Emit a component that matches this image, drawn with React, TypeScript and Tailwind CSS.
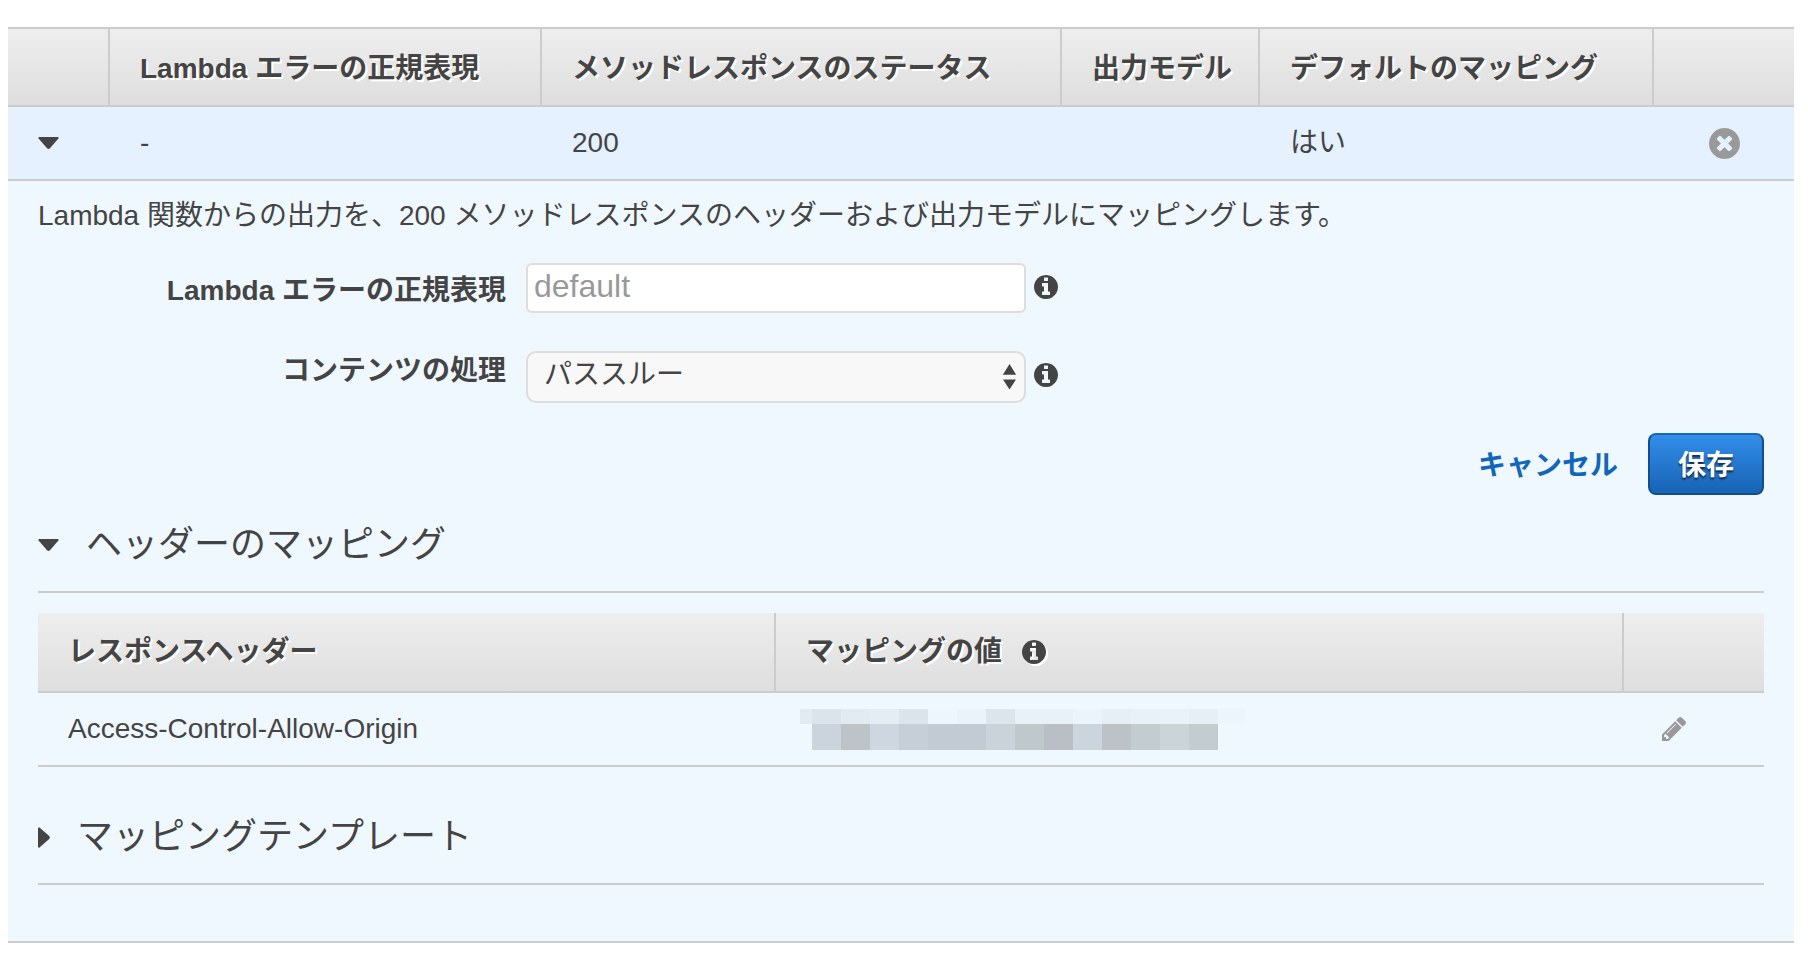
import React, { useState } from 'react';

interface IconProps {
  className?: string;
}

const CIRCLE = 'q0 209-103 385.5t-279.5 279.5-385.5 103-385.5-103-279.5-279.5-103-385.5 103-385.5 279.5-279.5 385.5-103 385.5 103 279.5 279.5 103 385.5z';

const InfoIcon: React.FC<IconProps> = ({ className }) => (
  <svg className={className} viewBox="128 128 1536 1536" fill="currentColor" aria-hidden="true">
    <path d={`M1152 1376v-160q0-14-9-23t-23-9h-96v-512q0-14-9-23t-23-9h-320q-14 0-23 9t-9 23v160q0 14 9 23t23 9h96v320h-96q-14 0-23 9t-9 23v160q0 14 9 23t23 9h448q14 0 23-9t9-23zm-128-896v-160q0-14-9-23t-23-9h-192q-14 0-23 9t-9 23v160q0 14 9 23t23 9h192q14 0 23-9t9-23zm640 416${CIRCLE}`} />
  </svg>
);

const RemoveIcon: React.FC<IconProps> = ({ className }) => (
  <svg className={className} viewBox="128 128 1536 1536" fill="currentColor" aria-hidden="true">
    <path d={`M1277 1122q0-26-19-45l-181-181 181-181q19-19 19-45 0-27-19-46l-90-90q-19-19-46-19-26 0-45 19l-181 181-181-181q-19-19-45-19-27 0-46 19l-90 90q-19 19-19 46 0 26 19 45l181 181-181 181q-19 19-19 45 0 27 19 46l90 90q19 19 46 19 26 0 45-19l181-181 181 181q19 19 45 19 27 0 46-19l90-90q19-19 19-46zm387-226${CIRCLE}`} />
  </svg>
);

const PencilIcon: React.FC<IconProps> = ({ className }) => (
  <svg className={className} viewBox="128 149 1515 1515" fill="currentColor" aria-hidden="true">
    <path d="M491 1536l91-91-235-235-91 91v107h128v128h107zm523-928q0-22-22-22-10 0-17 7l-542 542q-7 7-7 17 0 22 22 22 10 0 17-7l542-542q7-7 7-17zm-54-192l416 416-832 832h-416v-416zm683 96q0 53-37 90l-166 166-416-416 166-165q36-38 90-38 53 0 91 38l235 234q37 39 37 91z" />
  </svg>
);

const Caret: React.FC<{ open: boolean }> = ({ open }) =>
  open ? (
    <svg className="h-3 w-[21px] shrink-0" viewBox="0 0 21 12" fill="currentColor" aria-hidden="true">
      <path d="M1 0h19q1 0.6 0.4 1.5L12 11.2q-1.5 1.4-3 0L0.6 1.5Q0 0.6 1 0z" />
    </svg>
  ) : (
    <svg className="h-[21px] w-3 shrink-0" viewBox="0 0 12 21" fill="currentColor" aria-hidden="true">
      <path d="M0 1q0.6-1 1.5-0.4L11.2 9q1.4 1.5 0 3L1.5 20.4Q0.6 21 0 20z" />
    </svg>
  );

const th = 'h-20 border-[#ccc] bg-linear-to-b from-[#eee] to-[#dedede] px-[30px] text-left font-bold whitespace-nowrap [text-shadow:2px_2px_0_#fff]';
const outerTh = `${th} border-y-2 pt-1`;
const innerTh = `${th} border-b-2`;

const TOP_SHADES = ['#e2eaf2', '#dbe3eb', '#e2eaf2', '#e4ecf4', '#dbe3eb', '#edf5fd', '#eaf2fa', '#dce4ec', '#e8f0f8', '#e8f0f8', '#ebf3fb', '#e6eef6', '#e8f0f8', '#e9f1f9', '#e6eef6', '#ecf4fd'];
const BOTTOM_SHADES = ['#eff7ff', '#cbd3dc', '#bec3c7', '#ced6df', '#c6ced7', '#c2cad3', '#c2cad3', '#cad2da', '#bfc8cb', '#b9bfc4', '#ccd4dd', '#bdc2c7', '#c3cccf', '#cbd4d6', '#c3cccf', '#eff7ff'];

const MaskedValue = () => (
  <div className="-ml-1.5 w-[446px] max-w-full overflow-hidden">
    <div className="flex h-[15px]">
      {TOP_SHADES.map((shade, i) => (
        <span key={i} className="w-[29px] shrink-0 first:w-3" style={{ backgroundColor: shade }} />
      ))}
    </div>
    <div className="flex h-[26px]">
      {BOTTOM_SHADES.map((shade, i) => (
        <span key={i} className="w-[29px] shrink-0 first:w-3" style={{ backgroundColor: shade }} />
      ))}
    </div>
  </div>
);

const SectionTitle: React.FC<{ title: string; open: boolean; onToggle: () => void }> = ({ title, open, onToggle }) => (
  <h2 className="border-b-2 border-[#ccc] pb-5 text-4xl leading-[52px]">
    <button type="button" onClick={onToggle} aria-expanded={open} className="flex items-center gap-[27px] text-left">
      <Caret open={open} />
      {title}
    </button>
  </h2>
);

const App: React.FC = () => {
  const [headersOpen, setHeadersOpen] = useState(true);
  const [templatesOpen, setTemplatesOpen] = useState(false);

  return (
    <main className="min-h-screen bg-white pt-[27px] pr-3.5 pb-3 pl-2 font-['Liberation_Sans','Noto_Sans_CJK_JP',sans-serif] text-[28px] leading-9 text-[#444]">
      <table className="w-full table-fixed border-separate border-spacing-0">
        <colgroup>
          <col className="w-[102px]" />
          <col className="w-[432px]" />
          <col />
          <col className="w-[198px]" />
          <col className="w-[394px]" />
          <col className="w-[140px]" />
        </colgroup>
        <thead>
          <tr>
            <th className={`${outerTh} border-r-2`}></th>
            <th className={`${outerTh} border-r-2`}>Lambda エラーの正規表現</th>
            <th className={`${outerTh} border-r-2`}>メソッドレスポンスのステータス</th>
            <th className={`${outerTh} border-r-2`}>出力モデル</th>
            <th className={`${outerTh} border-r-2`}>デフォルトのマッピング</th>
            <th className={outerTh}></th>
          </tr>
        </thead>
        <tbody>
          <tr className="h-[74px] bg-[#e5f1ff] *:border-b-2 *:border-[#ccc]">
            <td className="pl-[30px]">
              <button type="button" aria-label="折りたたむ" className="flex"><Caret open /></button>
            </td>
            <td className="px-[30px]">-</td>
            <td className="px-[30px]">200</td>
            <td className="px-[30px]"></td>
            <td className="px-[30px]">はい</td>
            <td>
              <button type="button" aria-label="削除" className="mx-auto flex text-[#999]"><RemoveIcon className="size-[31px]" /></button>
            </td>
          </tr>
          <tr>
            <td colSpan={6} className="border-b-2 border-[#ccc] bg-[#f0f8ff] px-[30px] pt-[17px] pb-14">
              <p>Lambda 関数からの出力を、200 メソッドレスポンスのヘッダーおよび出力モデルにマッピングします。</p>

              <form onSubmit={e => e.preventDefault()}>
                <div className="mt-[29px] flex items-start">
                  <label htmlFor="error-regex" className="w-[468px] pt-2.5 text-right font-bold">Lambda エラーの正規表現</label>
                  <input
                    id="error-regex"
                    type="text"
                    placeholder="default"
                    className="ml-5 h-[50px] w-[500px] rounded-md border-2 border-[#ddd] bg-white px-1.5 pb-1 text-[32px] placeholder:text-[#999]"
                  />
                  <InfoIcon className="mt-3 ml-2 size-6" />
                </div>
                <div className="mt-[38px] flex items-start">
                  <label htmlFor="content-handling" className="w-[468px] pt-0.5 text-right font-bold">コンテンツの処理</label>
                  <div className="relative ml-5 w-[500px]">
                    <select id="content-handling" className="block h-[52px] w-full appearance-none rounded-[10px] border-2 border-[#ddd] bg-[#f8f8f8] px-4 pb-1">
                      <option>パススルー</option>
                    </select>
                    <svg className="pointer-events-none absolute top-3 right-2.5 h-[27px] w-[13px]" viewBox="0 0 13 27" fill="currentColor" aria-hidden="true">
                      <path d="M6.5 1L13 11.5H0zM6.5 26.5L0 16.5h13z" />
                      <path d="M0 11h13v1H0z" opacity="0.5" />
                    </svg>
                  </div>
                  <InfoIcon className="mt-3 ml-2 size-6" />
                </div>
                <div className="mt-[30px] flex items-center justify-end gap-[30px] font-bold">
                  <button type="button" className="pt-1 text-[#1166bb]">キャンセル</button>
                  <button type="submit" className="h-[62px] w-[116px] rounded-lg border-2 border-[#114e8f] border-t-[#1b66b5] bg-linear-to-b from-[#338eea] to-[#1763b4] pt-1 text-white [text-shadow:0_2px_2px_#000a]">保存</button>
                </div>
              </form>

              <section className="mt-6">
                <SectionTitle title="ヘッダーのマッピング" open={headersOpen} onToggle={() => setHeadersOpen(!headersOpen)} />
                {headersOpen && (
                  <table className="mt-5 w-full table-fixed border-separate border-spacing-0">
                    <colgroup>
                      <col className="w-[738px]" />
                      <col />
                      <col className="w-[140px]" />
                    </colgroup>
                    <thead>
                      <tr>
                        <th className={`${innerTh} border-r-2`}>レスポンスヘッダー</th>
                        <th className={`${innerTh} border-r-2`}>
                          <span className="flex items-center gap-5">
                            マッピングの値
                            <InfoIcon className="size-6 drop-shadow-[2px_2px_0_#fff]" />
                          </span>
                        </th>
                        <th className={innerTh}></th>
                      </tr>
                    </thead>
                    <tbody>
                      <tr className="h-[74px] *:border-b-2 *:border-[#ccc]">
                        <td className="px-[30px]">Access-Control-Allow-Origin</td>
                        <td className="px-[30px]"><MaskedValue /></td>
                        <td className="pl-[38px]">
                          <button type="button" aria-label="編集" className="flex text-[#999]"><PencilIcon className="size-6" /></button>
                        </td>
                      </tr>
                    </tbody>
                  </table>
                )}
              </section>

              <section className="mt-11">
                <SectionTitle title="マッピングテンプレート" open={templatesOpen} onToggle={() => setTemplatesOpen(!templatesOpen)} />
              </section>
            </td>
          </tr>
        </tbody>
      </table>
    </main>
  );
};

export default App;
